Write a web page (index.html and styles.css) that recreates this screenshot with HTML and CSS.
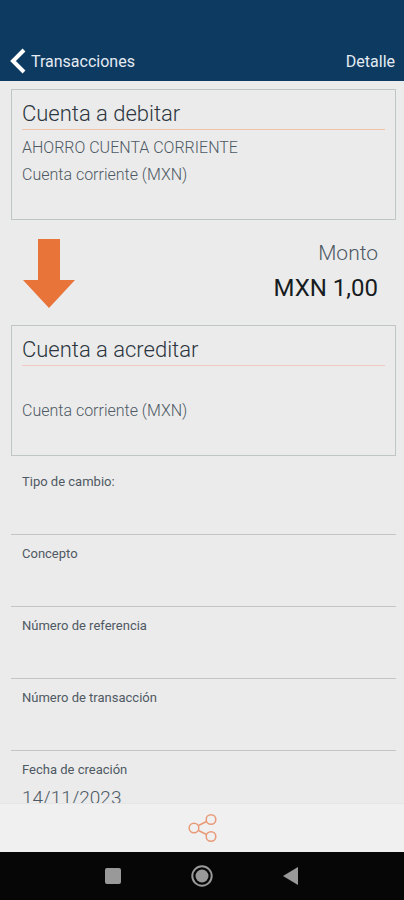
FILE: index.html
```html
<!DOCTYPE html>
<html lang="es">
<head>
<meta charset="utf-8">
<meta name="viewport" content="width=device-width, initial-scale=1">
<title>Detalle</title>
<link rel="stylesheet" href="styles.css">
</head>
<body>
<header class="topbar">
  <a class="back" href="#">
    <svg class="back-icon" width="18" height="26" viewBox="0 0 18 26" aria-hidden="true"><path d="M16 2 L5 13 L16 24" fill="none" stroke="#fff" stroke-width="4"/></svg>
    <span>Transacciones</span>
  </a>
  <h1 class="title">Detalle</h1>
</header>
<main class="content">
  <section class="card">
    <h2 class="card-title">Cuenta a debitar</h2>
    <p class="card-line card-name">AHORRO CUENTA CORRIENTE</p>
    <p class="card-line">Cuenta corriente (MXN)</p>
  </section>
  <section class="transfer">
    <svg width="52" height="69" viewBox="0 0 52 69" aria-hidden="true"><path d="M15 0 H37 V41 H52 L26 69 L0 41 H15 Z" fill="#e8743a"/></svg>
    <div class="amount">
      <p class="amount-label">Monto</p>
      <p class="amount-value">MXN 1,00</p>
    </div>
  </section>
  <section class="card card-credit">
    <h2 class="card-title">Cuenta a acreditar</h2>
    <p class="card-line card-name"></p>
    <p class="card-line">Cuenta corriente (MXN)</p>
  </section>
  <dl class="fields">
    <div class="field"><dt>Tipo de cambio:</dt><dd></dd></div>
    <div class="field"><dt>Concepto</dt><dd></dd></div>
    <div class="field"><dt>Número de referencia</dt><dd></dd></div>
    <div class="field"><dt>Número de transacción</dt><dd></dd></div>
    <div class="field"><dt>Fecha de creación</dt><dd>14/11/2023</dd></div>
  </dl>
</main>
<footer class="actions">
  <button class="icon-button" type="button" aria-label="Compartir">
    <svg width="30" height="30" viewBox="0 0 30 30" fill="none" stroke="#e89a78" stroke-width="1.5" aria-hidden="true"><circle cx="7" cy="15" r="4.800"/><circle cx="24" cy="6.500" r="4.800"/><circle cx="24" cy="23.500" r="4.800"/><path d="M11.500 12.500 L19.500 8.500 M11.500 17.500 L19.500 21.500"/></svg>
  </button>
</footer>
<nav class="system">
  <button class="icon-button" type="button" aria-label="Recientes">
    <svg width="22" height="22" viewBox="0 0 22 22" aria-hidden="true"><rect x="3" y="3" width="16" height="16" rx="2" fill="#999"/></svg>
  </button>
  <button class="icon-button" type="button" aria-label="Inicio">
    <svg width="22" height="22" viewBox="0 0 22 22" aria-hidden="true"><circle cx="11" cy="11" r="9.700" fill="none" stroke="#999" stroke-width="2"/><circle cx="11" cy="11" r="6.500" fill="#999"/></svg>
  </button>
  <button class="icon-button" type="button" aria-label="Atrás">
    <svg width="22" height="22" viewBox="0 0 22 22" aria-hidden="true"><path d="M3 11 L18 2 V20 Z" fill="#999"/></svg>
  </button>
</nav>
</body>
</html>
```
FILE: styles.css
```css
* {
  box-sizing: border-box;
}

body,
h1,
h2,
p,
dl,
dd {
  margin: 0;
}

body {
  display: flex;
  flex-direction: column;
  height: 100vh;
  background: #ebebeb;
  color: #4d5964;
  font-family: Roboto, "Liberation Sans", sans-serif;
}

.topbar {
  display: flex;
  align-items: center;
  justify-content: space-between;
  flex: none;
  padding: 48px 9px 7px 8px;
  background: #0d3a60;
  color: #e4ebf3;
}

.back {
  display: flex;
  align-items: center;
  gap: 5px;
  color: inherit;
  font-size: 16px;
  text-decoration: none;
}

.back-icon {
  display: block;
}

.title {
  font-size: 16px;
  font-weight: 400;
}

.content {
  flex: 1;
  min-height: 0;
  overflow: hidden;
  padding: 8px 8px 0 11px;
}

.card {
  height: 131px;
  padding: 11px 10px 0;
  border: 1px solid #c0c5c5;
}

.card-title {
  padding-bottom: 2px;
  border-bottom: 1px solid #f0c3a6;
  color: #2c3640;
  font-size: 22px;
  font-weight: 300;
  line-height: 26px;
}

.card-credit .card-title {
  border-bottom-color: #f2c8c2;
}

.card-line {
  font-size: 16px;
  font-weight: 300;
  line-height: 27px;
}

.card-name {
  min-height: 31px;
  padding-top: 4px;
}

.transfer {
  display: flex;
  justify-content: space-between;
  padding: 19px 18px 17px 12px;
}

.amount {
  text-align: right;
}

.amount-label {
  font-size: 21px;
  font-weight: 300;
  line-height: 28px;
}

.amount-value {
  padding-top: 4px;
  color: #171c22;
  font-size: 24px;
  line-height: 34px;
}

.fields {
  padding-top: 7px;
}

.field {
  height: 72px;
  padding: 11px 11px 0;
  border-bottom: 1px solid #c4c6c6;
}

.field dt {
  color: #4f5963;
  font-size: 13px;
  line-height: 16px;
}

.field dd {
  padding-top: 8px;
  font-size: 19px;
  font-weight: 300;
  line-height: 24px;
}

.actions {
  display: flex;
  align-items: center;
  justify-content: center;
  flex: none;
  height: 49px;
  border-top: 1px solid #e6e6e6;
  background: #f0f0f0;
}

.icon-button {
  display: flex;
  padding: 0;
  border: 0;
  background: none;
}

.system {
  display: flex;
  align-items: center;
  justify-content: center;
  gap: 67px;
  flex: none;
  height: 48px;
  background: #060606;
}
```
